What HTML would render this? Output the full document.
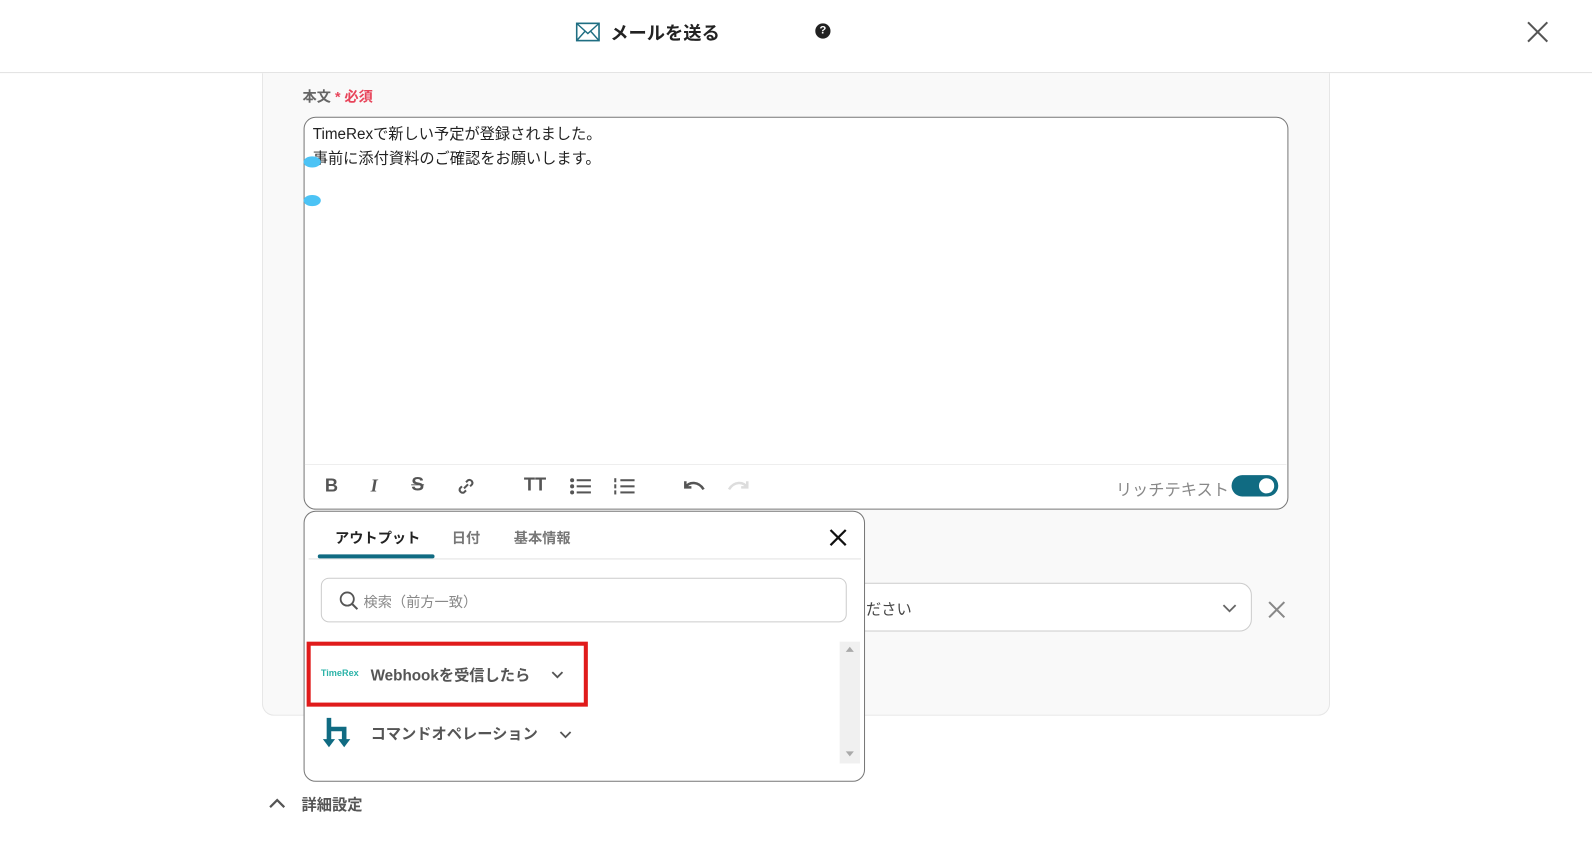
<!DOCTYPE html>
<html><head><meta charset="utf-8"><style>
*{box-sizing:border-box;margin:0;padding:0}
body{width:1592px;height:840px;background:#fff;font-family:"Liberation Sans","Noto Sans CJK JP",sans-serif;position:relative;overflow:hidden;color:#333}
#w{position:absolute;left:0;top:0;width:1568px;height:828px;transform:scale(1.0153);transform-origin:0 0}
.abs{position:absolute}
</style></head><body><div id="w">
<div class="abs" style="left:0;top:0;width:1568px;height:72px;border-bottom:1px solid #e2e2e2;background:#fff"></div>
<svg class="abs" style="left:567px;top:22px" width="24" height="19" viewBox="0 0 24 19"><rect x="1" y="1" width="22" height="17" fill="none" stroke="#1f6e82" stroke-width="1.6"/><path d="M1 1 L12 11 L23 1 M1 18 L9 9 M23 18 L15 9" fill="none" stroke="#1f6e82" stroke-width="1.4"/></svg>
<div class="abs" style="left:601px;top:19px;font-size:18px;font-weight:bold;color:#222">メールを送る</div>
<div class="abs" style="left:803px;top:23px;width:15px;height:15px;border-radius:50%;background:#222;color:#fff;font-size:11px;font-weight:bold;text-align:center;line-height:15px">?</div>
<svg class="abs" style="left:1504px;top:21px" width="21" height="21"><path d="M1 1L20 20M20 1L1 20" stroke="#555" stroke-width="2"/></svg>

<div class="abs" style="left:258px;top:72px;width:1052px;height:633px;background:#f9f9f9;border:1px solid #e6e6e6;border-top:none;border-radius:0 0 12px 12px"></div>
<div class="abs" style="left:298px;top:85px;font-size:14px;font-weight:bold;color:#666">本文 <span style="color:#e8445a">* 必須</span></div>

<div class="abs" style="left:299px;top:115px;width:970px;height:387px;background:#fff;border:1px solid #777;border-radius:12px"></div>
<div class="abs" style="left:308px;top:121px;font-size:15px;line-height:24px;color:#222">TimeRexで新しい予定が登録されました。<br>事前に添付資料のご確認をお願いします。</div>
<div class="abs" style="left:299px;top:154px;width:17px;height:11px;border-radius:50%;background:#4cc3f5"></div>
<div class="abs" style="left:299px;top:192px;width:17px;height:11px;border-radius:50%;background:#4cc3f5"></div>
<div class="abs" style="left:300px;top:457px;width:967px;height:1px;background:#eee"></div>
<div class="abs" style="left:320px;top:468px;font-size:18px;font-weight:bold;color:#555">B</div>
<div class="abs" style="left:365px;top:468px;font-size:18px;font-weight:bold;font-style:italic;color:#555;font-family:'Liberation Serif',serif">I</div>
<div class="abs" style="left:405px;top:467px;font-size:19px;font-weight:bold;color:#555;text-decoration:line-through">S</div>
<svg class="abs" style="left:449px;top:469px" width="20" height="20"><path d="M8 12l4-4M6 10l-2 2a3 3 0 004 4l2-2M14 10l2-2a3 3 0 00-4-4l-2 2" fill="none" stroke="#555" stroke-width="2"/></svg>
<div class="abs" style="left:516px;top:467px;font-size:18px;font-weight:bold;color:#555">TT</div>
<svg class="abs" style="left:561px;top:470px" width="22" height="18"><g fill="#555"><circle cx="2.5" cy="3" r="2"/><circle cx="2.5" cy="9" r="2"/><circle cx="2.5" cy="15" r="2"/><rect x="7" y="2" width="14" height="2"/><rect x="7" y="8" width="14" height="2"/><rect x="7" y="14" width="14" height="2"/></g></svg>
<svg class="abs" style="left:604px;top:470px" width="22" height="18"><g fill="#555"><rect x="1" y="1" width="2" height="4"/><rect x="1" y="7" width="2" height="4"/><rect x="1" y="13" width="2" height="4"/><rect x="7" y="2" width="14" height="2"/><rect x="7" y="8" width="14" height="2"/><rect x="7" y="14" width="14" height="2"/></g></svg>
<svg class="abs" style="left:672px;top:471px" width="24" height="14"><path d="M3 3v6h6M3 9c4-6 13-6 18 2" fill="none" stroke="#555" stroke-width="2.5"/></svg>
<svg class="abs" style="left:715px;top:471px" width="24" height="14"><path d="M21 3v6h-6M21 9c-4-6-13-6-18 2" fill="none" stroke="#ddd" stroke-width="2.5"/></svg>
<div class="abs" style="left:1099px;top:469px;font-size:16px;color:#888">リッチテキスト</div>
<div class="abs" style="left:1213px;top:468px;width:46px;height:21px;border-radius:11px;background:#106b82"></div>
<div class="abs" style="left:1240px;top:471px;width:15px;height:15px;border-radius:50%;background:#fff"></div>

<div class="abs" style="left:800px;top:574px;width:433px;height:48px;background:#fff;border:1px solid #ccc;border-radius:12px"></div>
<div class="abs" style="left:853px;top:589px;font-size:15px;color:#444">ださい</div>
<svg class="abs" style="left:1204px;top:594px" width="14" height="10"><path d="M1 2l6 6 6-6" fill="none" stroke="#666" stroke-width="1.8"/></svg>
<svg class="abs" style="left:1249px;top:592px" width="17" height="17"><path d="M1 1L16 16M16 1L1 16" stroke="#888" stroke-width="2"/></svg>

<div class="abs" style="left:299px;top:503px;width:553px;height:267px;background:#fff;border:1px solid #777;border-radius:12px"></div>
<div class="abs" style="left:330px;top:520px;font-size:14px;font-weight:bold;color:#222">アウトプット</div>
<div class="abs" style="left:445px;top:520px;font-size:14px;font-weight:bold;color:#777">日付</div>
<div class="abs" style="left:506px;top:520px;font-size:14px;font-weight:bold;color:#777">基本情報</div>
<div class="abs" style="left:304px;top:550px;width:544px;height:1px;background:#e2e2e2"></div>
<div class="abs" style="left:313px;top:546px;width:115px;height:4px;border-radius:2px;background:#106b82"></div>
<svg class="abs" style="left:817px;top:521px" width="17" height="17"><path d="M1 1L16 16M16 1L1 16" stroke="#111" stroke-width="2.2"/></svg>
<div class="abs" style="left:316px;top:569px;width:518px;height:44px;border:1px solid #ccc;border-radius:8px"></div>
<svg class="abs" style="left:334px;top:582px" width="20" height="20"><circle cx="8" cy="8" r="6.5" fill="none" stroke="#555" stroke-width="1.8"/><path d="M13 13l5 5" stroke="#555" stroke-width="2"/></svg>
<div class="abs" style="left:358px;top:583px;font-size:14px;color:#888">検索（前方一致）</div>
<div class="abs" style="left:827px;top:632px;width:20px;height:120px;background:#f0f0f0"></div>
<div class="abs" style="left:833px;top:637px;border:4px solid transparent;border-bottom:5px solid #aaa;border-top:none"></div>
<div class="abs" style="left:833px;top:740px;border:4px solid transparent;border-top:5px solid #aaa;border-bottom:none"></div>
<div class="abs" style="left:302px;top:632px;width:277px;height:64px;border:4px solid #e01b1b"></div>
<div class="abs" style="left:316px;top:658px;font-size:9px;font-weight:bold;color:#2bb3a8">TimeRex</div>
<div class="abs" style="left:365px;top:654px;font-size:15px;font-weight:bold;color:#555">Webhookを受信したら</div>
<svg class="abs" style="left:543px;top:661px" width="12" height="8"><path d="M1 1l5 5 5-5" fill="none" stroke="#555" stroke-width="1.8"/></svg>
<svg class="abs" style="left:317px;top:706px" width="32" height="32" viewBox="0 0 32 32"><path d="M7 1v22M7 12h15v11" fill="none" stroke="#106b82" stroke-width="4.5"/><path d="M1 22h12l-6 8zM16 22h12l-6 8z" fill="#106b82"/></svg>
<div class="abs" style="left:365px;top:712px;font-size:15px;font-weight:bold;color:#555">コマンドオペレーション</div>
<svg class="abs" style="left:551px;top:720px" width="12" height="8"><path d="M1 1l5 5 5-5" fill="none" stroke="#555" stroke-width="1.8"/></svg>

<svg class="abs" style="left:265px;top:786px" width="16" height="11"><path d="M1 9l7-7 7 7" fill="none" stroke="#555" stroke-width="2.2"/></svg>
<div class="abs" style="left:297px;top:782px;font-size:15px;font-weight:bold;color:#555">詳細設定</div>
</div></body></html>
